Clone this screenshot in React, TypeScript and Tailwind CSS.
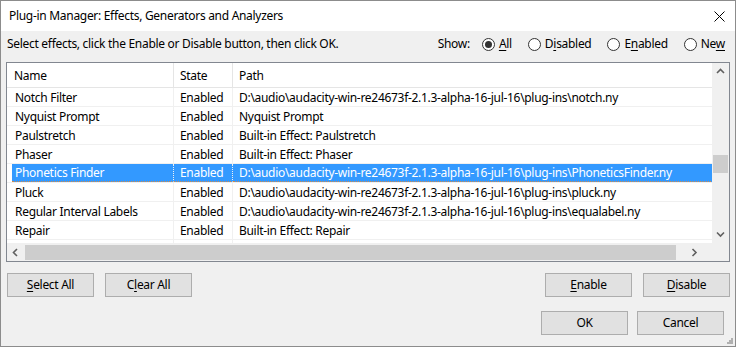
import React from "react";

type Row = { name: string; state: string; path: string; selected?: boolean };

const BASE = "D:\\audio\\audacity-win-re24673f-2.1.3-alpha-16-jul-16\\plug-ins\\";

const rows: Row[] = [
  { name: "Notch Filter", state: "Enabled", path: BASE + "notch.ny" },
  { name: "Nyquist Prompt", state: "Enabled", path: "Nyquist Prompt" },
  { name: "Paulstretch", state: "Enabled", path: "Built-in Effect: Paulstretch" },
  { name: "Phaser", state: "Enabled", path: "Built-in Effect: Phaser" },
  { name: "Phonetics Finder", state: "Enabled", path: BASE + "PhoneticsFinder.ny", selected: true },
  { name: "Pluck", state: "Enabled", path: BASE + "pluck.ny" },
  { name: "Regular Interval Labels", state: "Enabled", path: BASE + "equalabel.ny" },
  { name: "Repair", state: "Enabled", path: "Built-in Effect: Repair" },
];

function Radio({ checked, label, u }: { checked?: boolean; label: string; u: number }) {
  return (
    <div className="flex items-center gap-[4px]">
      <span className="w-[13px] h-[13px] rounded-full border border-[#333] bg-white flex items-center justify-center">
        {checked && <span className="w-[7px] h-[7px] rounded-full bg-[#333]" />}
      </span>
      <span>
        {label.slice(0, u)}
        <span className="underline underline-offset-2">{label[u]}</span>
        {label.slice(u + 1)}
      </span>
    </div>
  );
}

function Btn({ label, u }: { label: string; u?: number }) {
  return (
    <button className="w-[87px] h-[24px] bg-[#e1e1e1] border border-[#adadad] flex items-center justify-center">
      {u === undefined ? (
        label
      ) : (
        <span>
          {label.slice(0, u)}
          <span className="underline underline-offset-2">{label[u]}</span>
          {label.slice(u + 1)}
        </span>
      )}
    </button>
  );
}

function Chevron({ dir }: { dir: "up" | "down" | "left" | "right" }) {
  const d = {
    up: "M1 5 L4.5 1.5 L8 5",
    down: "M1 1.5 L4.5 5 L8 1.5",
    left: "M5 1 L1.5 4.5 L5 8",
    right: "M1.5 1 L5 4.5 L1.5 8",
  }[dir];
  const vertical = dir === "up" || dir === "down";
  return (
    <svg width={vertical ? 9 : 7} height={vertical ? 7 : 9} viewBox={vertical ? "0 0 9 7" : "0 0 7 9"}>
      <path d={d} fill="none" stroke="#606060" strokeWidth="1.6" />
    </svg>
  );
}

const sel = "bg-[#3399ff] text-white border-b border-dotted border-b-[#d08a4a]";

export default function App() {
  return (
    <div className="w-[736px] h-[347px] border border-[#8c8c8c] bg-[#f0f0f0] flex flex-col text-[12px] tracking-[-0.3px] text-black font-['Segoe_UI','Noto_Sans',sans-serif] leading-none select-none">
      {/* Title bar */}
      <div className="h-[30px] bg-white flex items-center pl-[8px] pr-[10px] shrink-0">
        <span>Plug-in Manager: Effects, Generators and Analyzers</span>
        <svg className="ml-auto" width="11" height="11" viewBox="0 0 11 11">
          <path d="M0.5 0.5 L10.5 10.5 M10.5 0.5 L0.5 10.5" stroke="#000" strokeWidth="1" />
        </svg>
      </div>

      <div className="flex-1 flex flex-col px-[5px]">
        {/* Instruction + show filter */}
        <div className="h-[26px] flex items-center">
          <span className="ml-[1px]">Select effects, click the Enable or Disable button, then click OK.</span>
          <div className="ml-auto flex items-center mr-[5px]">
            <span className="mr-[12px]">Show:</span>
            <div className="flex items-center gap-[16px]">
              <Radio checked label="All" u={0} />
              <Radio label="Disabled" u={1} />
              <Radio label="Enabled" u={1} />
              <Radio label="New" u={2} />
            </div>
          </div>
        </div>

        {/* List */}
        <div className="mt-[5px] h-[200px] border border-[#828790] bg-white flex flex-col shrink-0">
          <div className="flex h-[180px]">
            <div className="w-[705px] overflow-hidden">
              <div className="w-[1000px]">
                <div className="h-[25px] flex items-center border-b border-[#e5e5e5]">
                  <div className="w-[167px] h-full flex items-center pt-[1px] pl-[7px] border-r border-[#e5e5e5]">Name</div>
                  <div className="w-[59px] h-full flex items-center pt-[1px] pl-[6px] border-r border-[#e5e5e5]">State</div>
                  <div className="flex-1 h-full flex items-center pt-[1px] pl-[6px]">Path</div>
                </div>
                {rows.map((r) => (
                  <div key={r.name} className="h-[19px] flex border-b border-[#f0f0f0] pl-[5px]">
                    <div
                      className={`w-[162px] h-full flex items-center pt-[1px] pl-[3px] border-r border-[#f0f0f0] ${r.selected ? sel : ""}`}
                    >
                      {r.name}
                    </div>
                    <div
                      className={`w-[59px] h-full flex items-center pt-[1px] pl-[6px] border-r border-[#f0f0f0] ${r.selected ? sel : ""}`}
                    >
                      {r.state}
                    </div>
                    <div className={`flex-1 h-full flex items-center pt-[1px] pl-[6px] whitespace-nowrap ${r.selected ? sel : ""}`}>
                      {r.path}
                    </div>
                  </div>
                ))}
                <div className="h-[19px] flex pl-[5px]">
                  <div className="w-[162px] border-r border-[#f0f0f0]" />
                  <div className="w-[59px] border-r border-[#f0f0f0]" />
                </div>
              </div>
            </div>
            {/* Vertical scrollbar */}
            <div className="w-[17px] bg-[#f0f0f0] flex flex-col">
              <div className="h-[17px] flex items-center justify-center">
                <Chevron dir="up" />
              </div>
              <div className="flex-1 flex flex-col">
                <div className="h-[75px]" />
                <div className="h-[18px] mx-[1px] bg-[#cdcdcd]" />
              </div>
              <div className="h-[17px] flex items-center justify-center">
                <Chevron dir="down" />
              </div>
            </div>
          </div>
          {/* Horizontal scrollbar */}
          <div className="flex-1 flex bg-[#f0f0f0]">
            <div className="w-[705px] flex items-center">
              <div className="w-[17px] flex items-center justify-center">
                <Chevron dir="left" />
              </div>
              <div className="w-[651px] h-[15px] bg-[#cdcdcd] ml-[1px]" />
              <div className="flex-1 flex items-center justify-center">
                <Chevron dir="right" />
              </div>
            </div>
            <div className="w-[17px]" />
          </div>
        </div>

        {/* Buttons */}
        <div className="mt-[11px] flex justify-between">
          <div className="flex gap-[11px] ml-[1px]">
            <Btn label="Select All" u={0} />
            <Btn label="Clear All" u={1} />
          </div>
          <div className="flex gap-[11px]">
            <Btn label="Enable" u={0} />
            <Btn label="Disable" u={0} />
          </div>
        </div>
        <div className="mt-[14px] flex justify-end items-end">
          <div className="flex gap-[9px] mr-[6px]">
            <Btn label="OK" />
            <Btn label="Cancel" />
          </div>
        </div>
        <div className="flex-1 flex justify-end items-end pb-[2px] -mr-[3px]">
          <svg width="6" height="6" viewBox="0 0 6 6">
            <rect x="4" y="0" width="2" height="2" fill="#b0b0b0" />
            <rect x="2" y="2" width="2" height="2" fill="#b0b0b0" />
            <rect x="4" y="2" width="2" height="2" fill="#b0b0b0" />
            <rect x="0" y="4" width="2" height="2" fill="#b0b0b0" />
            <rect x="2" y="4" width="2" height="2" fill="#b0b0b0" />
            <rect x="4" y="4" width="2" height="2" fill="#b0b0b0" />
          </svg>
        </div>
      </div>
    </div>
  );
}
